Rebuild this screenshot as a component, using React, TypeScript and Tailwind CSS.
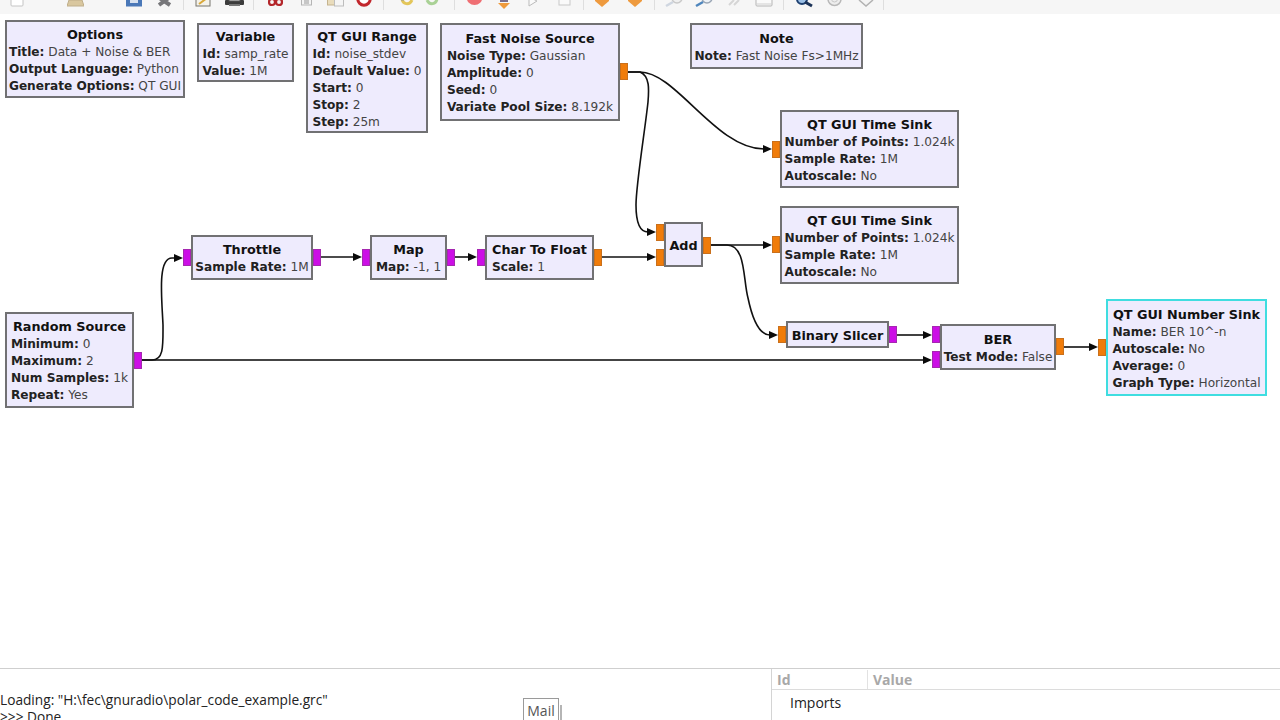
import React from "react";

type Port = { x: number; y: number; color: "m" | "o" };
type BlockProps = {
  x: number;
  y: number;
  w: number;
  h: number;
  title: string;
  params?: [string, string][];
  selected?: boolean;
};

const blocks: BlockProps[] = [
  { x: 5, y: 20, w: 180, h: 78, title: "Options", params: [["Title", "Data + Noise & BER"], ["Output Language", "Python"], ["Generate Options", "QT GUI"]] },
  { x: 197, y: 23, w: 97, h: 59, title: "Variable", params: [["Id", "samp_rate"], ["Value", "1M"]] },
  { x: 306, y: 23, w: 122, h: 110, title: "QT GUI Range", params: [["Id", "noise_stdev"], ["Default Value", "0"], ["Start", "0"], ["Stop", "2"], ["Step", "25m"]] },
  { x: 440, y: 23, w: 180, h: 98, title: "Fast Noise Source", params: [["Noise Type", "Gaussian"], ["Amplitude", "0"], ["Seed", "0"], ["Variate Pool Size", "8.192k"]] },
  { x: 690, y: 23, w: 173, h: 46, title: "Note", params: [["Note", "Fast Noise Fs>1MHz"]] },
  { x: 780, y: 110, w: 179, h: 78, title: "QT GUI Time Sink", params: [["Number of Points", "1.024k"], ["Sample Rate", "1M"], ["Autoscale", "No"]] },
  { x: 780, y: 206, w: 179, h: 78, title: "QT GUI Time Sink", params: [["Number of Points", "1.024k"], ["Sample Rate", "1M"], ["Autoscale", "No"]] },
  { x: 664, y: 222, w: 39, h: 45, title: "Add" },
  { x: 786, y: 321, w: 103, h: 27, title: "Binary Slicer" },
  { x: 940, y: 324, w: 116, h: 46, title: "BER", params: [["Test Mode", "False"]] },
  { x: 1106, y: 299, w: 161, h: 97, title: "QT GUI Number Sink", selected: true, params: [["Name", "BER 10^-n"], ["Autoscale", "No"], ["Average", "0"], ["Graph Type", "Horizontal"]] },
  { x: 5, y: 312, w: 129, h: 96, title: "Random Source", params: [["Minimum", "0"], ["Maximum", "2"], ["Num Samples", "1k"], ["Repeat", "Yes"]] },
  { x: 191, y: 235, w: 122, h: 45, title: "Throttle", params: [["Sample Rate", "1M"]] },
  { x: 370, y: 235, w: 77, h: 45, title: "Map", params: [["Map", "-1, 1"]] },
  { x: 485, y: 235, w: 109, h: 45, title: "Char To Float", params: [["Scale", "1"]] },
];

const ports: Port[] = [
  { x: 134, y: 352, color: "m" },
  { x: 183, y: 249, color: "m" },
  { x: 313, y: 249, color: "m" },
  { x: 362, y: 249, color: "m" },
  { x: 447, y: 249, color: "m" },
  { x: 477, y: 249, color: "m" },
  { x: 594, y: 249, color: "o" },
  { x: 620, y: 63, color: "o" },
  { x: 656, y: 224, color: "o" },
  { x: 656, y: 249, color: "o" },
  { x: 703, y: 237, color: "o" },
  { x: 772, y: 141, color: "o" },
  { x: 772, y: 236, color: "o" },
  { x: 778, y: 326, color: "o" },
  { x: 889, y: 326, color: "m" },
  { x: 932, y: 326, color: "m" },
  { x: 932, y: 351, color: "m" },
  { x: 1056, y: 338, color: "o" },
  { x: 1098, y: 339, color: "o" },
];

const wires = [
  "M142 360 H923",
  "M142 360 H152 C164 360 163 345 163 325 C162 300 157 258 172 258 H176",
  "M321 257 H354",
  "M455 257 H469",
  "M602 257 H648",
  "M628 72 H640 C676 72 716 149 764 149",
  "M628 72 H640 C650 76 649 90 648 102 C645 130 636 185 636 205 C636 224 640 232 648 232",
  "M711 245 H764",
  "M711 245 H727 C746 245 743 280 748 298 C753 322 760 335 770 335",
  "M897 335 H924",
  "M1064 347 H1090",
];

const arrows: [number, number][] = [
  [183, 258], [362, 257], [477, 257], [656, 257], [772, 149], [656, 232], [772, 245], [778, 335], [932, 335], [932, 360], [1098, 347],
];

function Block({ x, y, w, h, title, params, selected }: BlockProps) {
  return (
    <div
      className={`absolute flex items-center justify-center whitespace-nowrap border-2 bg-[#eeebfd] pt-[2px] text-[12.15px] leading-[17px] text-[#444] ${selected ? "border-[#3fdde0]" : "border-[#717173]"}`}
      style={{ left: x, top: y, width: w, height: h }}
    >
      <div>
        <div className="text-center text-[12.8px] font-bold leading-[18px] text-[#111]">{title}</div>
        {params?.map(([k, v]) => (
          <div key={k}>
            <span className="font-bold text-[#222]">{k}:</span> {v}
          </div>
        ))}
      </div>
    </div>
  );
}

function Sep({ className }: { className: string }) {
  return <div className={`h-[10px] w-px shrink-0 bg-[#dedede] ${className}`} />;
}

function Toolbar() {
  return (
    <div className="flex h-[14px] items-start overflow-hidden bg-[#f6f6f6]">
      <svg className="ml-[10px] shrink-0" width="14" height="14"><rect x="1" y="-6" width="12" height="12" rx="1" fill="#fff" stroke="#c4c4c4" /></svg>
      <svg className="ml-[43px] shrink-0" width="17" height="14"><path d="M0 6 L2 0 H15 L17 6 Z" fill="#d9c79f" stroke="#bfae8a" /></svg>
      <svg className="ml-[42px] shrink-0" width="16" height="14"><rect x="0" y="-6" width="16" height="12.5" fill="#4a78b8" /><rect x="4" y="0" width="8" height="3" fill="#d8e2f0" /></svg>
      <svg className="ml-[15px] shrink-0" width="15" height="14"><path d="M1 -3 L13 5 M13 -3 L2 5" stroke="#77777a" strokeWidth="4" /></svg>
      <Sep className="ml-[11px]" />
      <svg className="ml-[11px] shrink-0" width="17" height="14"><rect x="1" y="-6" width="14" height="12" fill="#f4f2ea" stroke="#77756c" /><path d="M4 4 L12 -2" stroke="#d9a83a" strokeWidth="2" /></svg>
      <svg className="ml-[13px] shrink-0" width="19" height="14"><rect x="0" y="0" width="19" height="5" rx="1" fill="#3c3c3c" /><rect x="4" y="-4" width="11" height="5" fill="#e8e8e8" stroke="#555" /><rect x="4" y="4" width="11" height="2" fill="#777" /></svg>
      <Sep className="ml-[9px]" />
      <svg className="ml-[14px] shrink-0" width="15" height="14"><circle cx="4" cy="2" r="3" fill="none" stroke="#b3262a" strokeWidth="2.2" /><circle cx="11" cy="2" r="3" fill="none" stroke="#b3262a" strokeWidth="2.2" /></svg>
      <svg className="ml-[18px] shrink-0" width="11" height="14"><rect x="0.5" y="-5" width="10" height="10" fill="#f4f4f4" stroke="#b5b5b5" /><path d="M3 1 H8 M3 3 H8" stroke="#999" /></svg>
      <svg className="ml-[15px] shrink-0" width="17" height="14"><rect x="0.5" y="-5" width="9" height="10" fill="#e9dcbc" stroke="#c5b48f" /><rect x="7.5" y="-3" width="9" height="9" fill="#f5f5f5" stroke="#bdbdbd" /></svg>
      <svg className="ml-[12px] shrink-0" width="16" height="14"><circle cx="8" cy="-1" r="6.2" fill="#fff" stroke="#c2272d" strokeWidth="3" /></svg>
      <Sep className="ml-[11px]" />
      <svg className="ml-[16px] shrink-0" width="14" height="14"><path d="M2 -1 C3 4 9 6 12 0" fill="none" stroke="#e3c65a" strokeWidth="3" /><path d="M1 0 L4 0" stroke="#999" /></svg>
      <svg className="ml-[11px] shrink-0" width="14" height="14"><path d="M12 -1 C11 4 5 6 2 0" fill="none" stroke="#a9d195" strokeWidth="3" /></svg>
      <Sep className="ml-[15px]" />
      <svg className="ml-[11px] shrink-0" width="17" height="14"><circle cx="8.5" cy="-3" r="8" fill="#ef6f73" /></svg>
      <svg className="ml-[14px] shrink-0" width="14" height="14"><rect x="3" y="0" width="8" height="2" fill="#7b6f8c" /><path d="M1 3 H13 L7 9 Z" fill="#ef9a3c" /></svg>
      <svg className="ml-[17px] shrink-0" width="10" height="14"><path d="M1 -3 L9 1 L1 6 Z" fill="#fafafa" stroke="#bbb" /></svg>
      <svg className="ml-[20px] shrink-0" width="13" height="14"><rect x="1" y="-5" width="11" height="10" fill="#fafafa" stroke="#c8c8c8" /></svg>
      <Sep className="ml-[12px]" />
      <svg className="ml-[11px] shrink-0" width="14" height="14"><path d="M0 -2 H14 V1 L7 7 L0 1 Z" fill="#ee9a3e" /></svg>
      <svg className="ml-[19px] shrink-0" width="14" height="14"><path d="M0 -2 H14 V1 L7 7 L0 1 Z" fill="#ee9a3e" /></svg>
      <Sep className="ml-[12px]" />
      <svg className="ml-[10px] shrink-0" width="20" height="14"><circle cx="12" cy="-2" r="5" fill="#f0f0f0" stroke="#c9c9c9" strokeWidth="1.5" /><path d="M8 2 L1 6" stroke="#cfd6e0" strokeWidth="2.5" /></svg>
      <svg className="ml-[10px] shrink-0" width="20" height="14"><circle cx="12" cy="-2" r="5" fill="#eef2f6" stroke="#9aa6b5" strokeWidth="1.5" /><path d="M8 2 L1 6" stroke="#4f86bd" strokeWidth="2.5" /></svg>
      <svg className="ml-[12px] shrink-0" width="14" height="14"><path d="M2 5 L7 0 M7 5 L12 0" stroke="#d6d6d6" strokeWidth="2" /></svg>
      <svg className="ml-[14px] shrink-0" width="18" height="14"><rect x="1" y="-4" width="16" height="10" rx="1" fill="#fafafa" stroke="#b5b5b5" /><path d="M1 4 H17" stroke="#d0d0d0" /></svg>
      <Sep className="ml-[10px]" />
      <svg className="ml-[12px] shrink-0" width="17" height="14"><circle cx="6" cy="-1" r="5" fill="#9cc0e6" stroke="#1d3f70" strokeWidth="2" /><path d="M9 2 L16 6" stroke="#1c3358" strokeWidth="3" /></svg>
      <svg className="ml-[13px] shrink-0" width="17" height="14"><circle cx="8.5" cy="-1" r="6.5" fill="#ededed" stroke="#b8b8b8" strokeWidth="1.5" /><circle cx="8.5" cy="-1" r="3" fill="none" stroke="#c9c9c9" /></svg>
      <svg className="ml-[15px] shrink-0" width="16" height="14"><path d="M1 0 L8 6 L15 0" fill="#f4f4f4" stroke="#b2b2b2" strokeWidth="1.5" /></svg>
      <Sep className="ml-[9px]" />
    </div>
  );
}

export default function App() {
  return (
    <div className="relative flex h-[720px] w-[1280px] flex-col overflow-hidden bg-white font-['DejaVu_Sans',sans-serif]">
      <Toolbar />

      {/* flowgraph canvas */}
      <div className="relative flex-1">
        <div className="absolute left-0 top-[-14px] h-[720px] w-[1280px]">
          {blocks.map((b, i) => <Block key={i} {...b} />)}
          {ports.map((p, i) => (
            <div
              key={i}
              className={`absolute h-[17px] w-[8px] border ${p.color === "m" ? "border-[#a528b0] bg-[#cc0ee6]" : "border-[#c9701c] bg-[#f07c0a]"}`}
              style={{ left: p.x, top: p.y }}
            />
          ))}
          <svg className="absolute left-0 top-0" width="1280" height="720" fill="none">
            {wires.map((d, i) => <path key={i} d={d} stroke={i === 0 ? "#444" : "#111"} strokeWidth={i === 0 ? 2 : 1.6} />)}
            {arrows.map(([x, y], i) => <path key={i} d={`M${x} ${y} L${x - 9} ${y - 4} V${y + 4} Z`} fill="#0a0a0a" />)}
          </svg>
        </div>
      </div>

      {/* bottom panels */}
      <div className="relative flex h-[52px] shrink-0 border-t border-[#cfcfcf] font-['Open_Sans',sans-serif] text-[14px] text-[#222]">
        <div className="w-[771px] shrink-0 overflow-hidden pt-[22px] text-[13.7px] leading-[17px]">
          <div className="whitespace-nowrap">Loading: "H:\fec\gnuradio\polar_code_example.grc"</div>
          <div className="whitespace-nowrap">&gt;&gt;&gt; Done</div>
        </div>
        <div className="flex-1 border-l border-[#d4d4d4]">
          <div className="flex h-[21px] items-center border-b border-[#dcdcdc] pt-px font-bold text-[#a8a8a8]">
            <div className="flex h-full w-[96px] items-center border-r border-[#e2e2e2] pl-[5px]">Id</div>
            <div className="pl-[5px]">Value</div>
          </div>
          <div className="pl-[18px] pt-[2px]">Imports</div>
        </div>
        <div className="absolute left-[523px] top-[29px] flex h-[24px] w-[36px] items-center justify-center border border-[#9a9a9a] bg-white text-[14px] text-[#555]">Mail</div>
        <div className="absolute left-[560px] top-[36px] h-[16px] w-[2px] bg-[#b5b5b5]" />
      </div>
    </div>
  );
}
